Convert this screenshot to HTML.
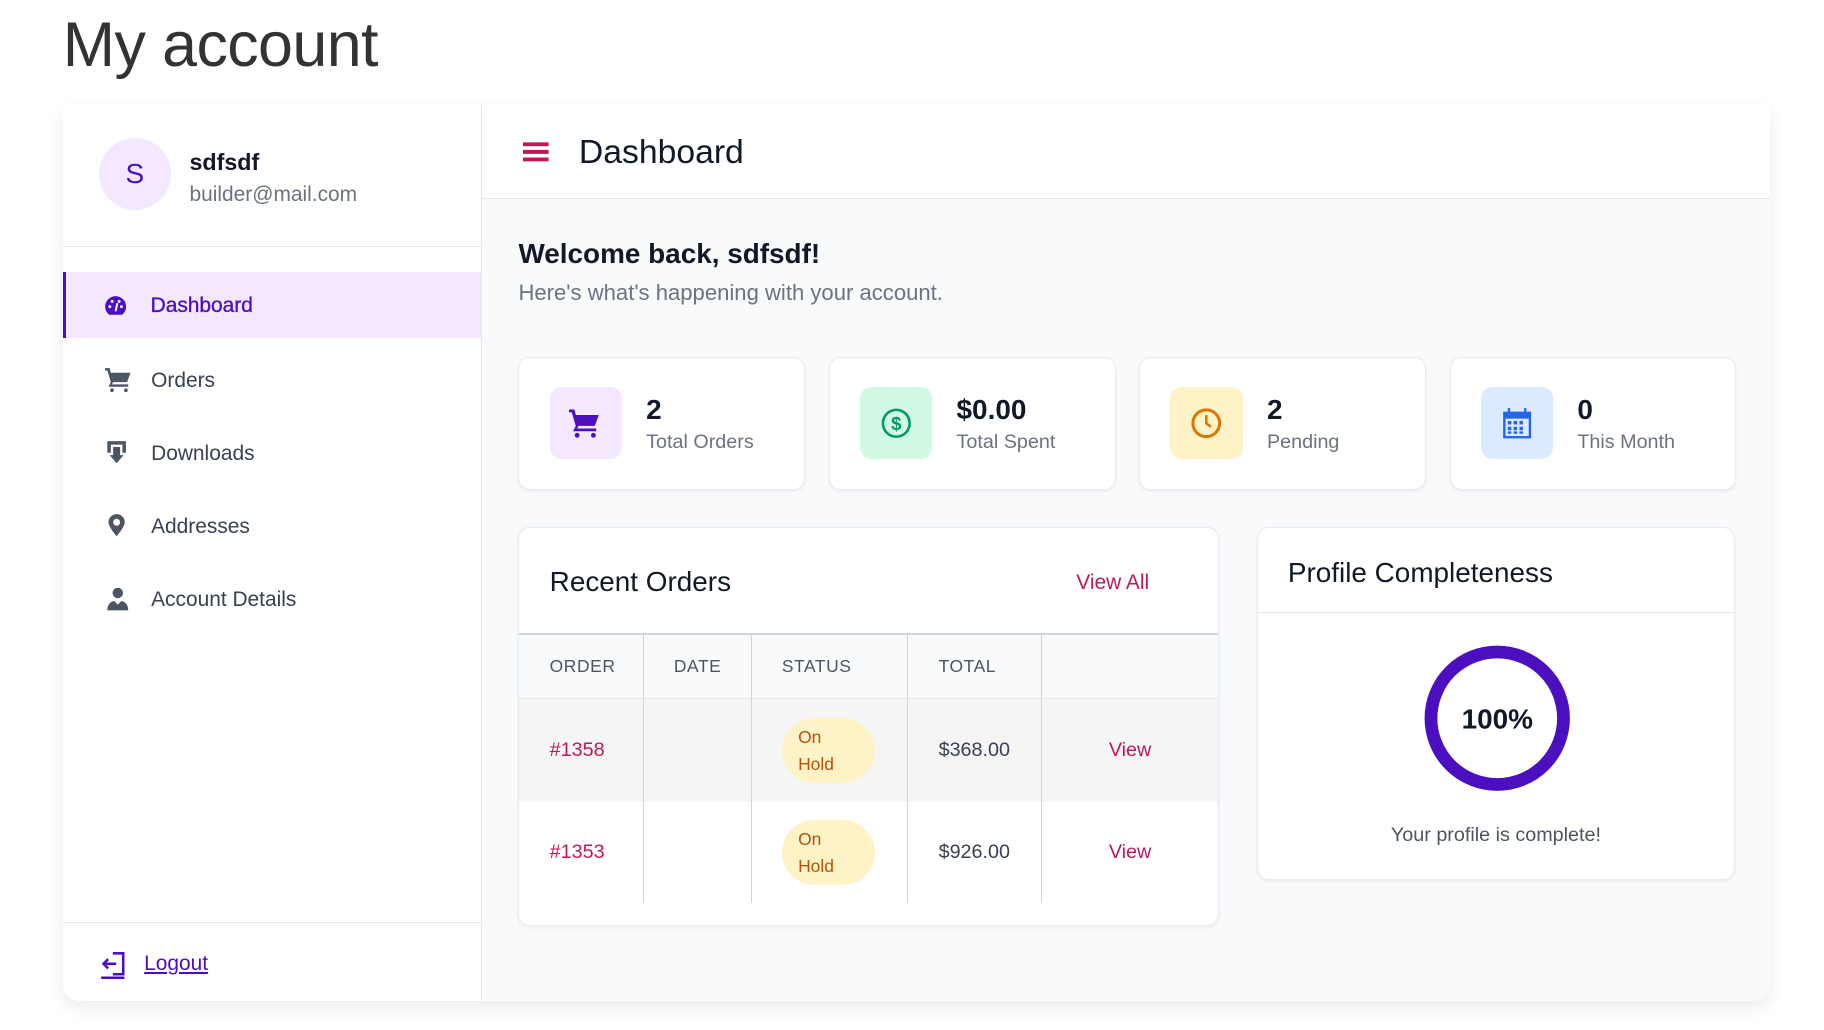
<!DOCTYPE html>
<html><head><meta charset="utf-8">
<style>
html{zoom:1.1625}
body{margin:0;width:1569px;height:886px;background:#fff;font-family:"Liberation Sans",sans-serif;position:relative;overflow:hidden;color:#1f2937}
.a{position:absolute}
h1{position:absolute;left:54px;top:8px;margin:0;font-size:54px;font-weight:400;color:#333;letter-spacing:-0.5px}
.panel{left:54px;top:90px;width:1469px;height:771px;background:#f8fafc;border-radius:0 0 14px 14px;box-shadow:0 6px 14px rgba(0,0,0,.08);overflow:hidden}
.side{left:0;top:0;width:360px;height:771px;background:#fff;border-right:1px solid #e5e7eb}
.nav{left:0;width:360px;height:57px;display:flex;align-items:center;font-size:18px;color:#374151}
.nav svg{position:absolute;left:36px}
.nav span{position:absolute;left:76px;top:19px}
.card{background:#fff;border:1px solid #e8ebef;border-radius:10px;box-shadow:0 1px 3px rgba(0,0,0,.06)}
.ib{position:absolute;left:26px;top:25px;width:62px;height:62px;border-radius:10px;display:flex;align-items:center;justify-content:center}
.num{position:absolute;left:109px;top:31px;font-size:24px;font-weight:700;color:#111827}
.lbl{position:absolute;left:109px;top:63px;font-size:17px;color:#6b7280}
td,th{border-left:1px solid #d1d5db;padding:0 0 0 26px;text-align:left}
th{font-weight:400;font-size:15px;letter-spacing:.5px;color:#4b5563;height:54px;border-bottom:1px solid #e5e7eb;background:#f8fafc}
td{font-size:17px;color:#374151}
.badge{display:inline-block;background:#fef3c7;color:#b45309;font-size:15px;line-height:23px;padding:5px 14px;border-radius:28px;width:52px}
.v{color:#be185d;text-align:center;padding:0}
</style></head><body>
<h1>My account</h1>
<div class="a panel">
 <div class="a side">
  <div class="a" style="left:31px;top:29px;width:62px;height:62px;border-radius:50%;background:#f3e8ff;color:#4c0fbf;font-size:24px;display:flex;align-items:center;justify-content:center">S</div>
  <div class="a" style="left:109px;top:38px;font-size:20px;font-weight:700;color:#111827">sdfsdf</div>
  <div class="a" style="left:109px;top:67px;font-size:18px;color:#6b7280">builder@mail.com</div>
  <div class="a" style="left:0;top:122px;width:360px;border-top:1px solid #e5e7eb"></div>
  <div class="a nav" style="top:144px;background:#f3e8ff;border-left:3px solid #4c0fbf;width:357px;color:#4c0fbf;font-weight:500">
   <svg width="20" height="18" viewBox="0 0 20 18" style="left:33px"><path d="M10 1a9 9 0 0 0-9 9c0 3 1.5 5.5 3.5 7h11c2-1.5 3.5-4 3.5-7a9 9 0 0 0-9-9z" fill="#4c0fbf"/><circle cx="5" cy="10" r="1.3" fill="#f3e8ff"/><circle cx="7" cy="5.5" r="1.3" fill="#f3e8ff"/><circle cx="13" cy="5.5" r="1.3" fill="#f3e8ff"/><circle cx="15" cy="10" r="1.3" fill="#f3e8ff"/><path d="M10 14l1.5-7" stroke="#f3e8ff" stroke-width="1.8"/></svg>
   <span style="left:73px;-webkit-text-stroke:0.3px #4c0fbf">Dashboard</span></div>
  <div class="a nav" style="top:208px"><svg width="24" height="22" viewBox="0 0 24 22"><path d="M0 1h4l1 4h17l-3 8H7l-1 2h14v2H3l2-4L2 3H0z" fill="#4b5563"/><circle cx="6" cy="20" r="1.6" fill="#4b5563"/><circle cx="18" cy="20" r="1.6" fill="#4b5563"/></svg><span>Orders</span></div>
  <div class="a nav" style="top:271px"><svg width="20" height="22" viewBox="0 0 20 22"><path d="M2 1h16v10h-3V4H5v7H2z M7 6h6v7h3l-6 7-6-7h3z" fill="#4b5563"/></svg><span>Downloads</span></div>
  <div class="a nav" style="top:334px"><svg width="20" height="22" viewBox="0 0 20 22"><path d="M10 1a7 7 0 0 0-7 7c0 4 7 12 7 12s7-8 7-12a7 7 0 0 0-7-7zm0 4a3 3 0 1 1 0 6 3 3 0 0 1 0-6z" fill="#4b5563"/></svg><span>Addresses</span></div>
  <div class="a nav" style="top:397px"><svg width="22" height="22" viewBox="0 0 22 22"><circle cx="11" cy="6" r="4.5" fill="#4b5563"/><path d="M2 21c0-5 3-8 6-8l3 3 3-3c3 0 6 3 6 8z" fill="#4b5563"/></svg><span>Account Details</span></div>
  <div class="a" style="left:0;top:703px;width:360px;border-top:1px solid #e5e7eb"></div>
  <svg class="a" style="left:32px;top:728px" width="22" height="24" viewBox="0 0 22 24"><path d="M11 2h9v18h-9M14 11H3m4-4-4 4 4 4M1 23h20" fill="none" stroke="#4c0fbf" stroke-width="2.2"/></svg>
  <div class="a" style="left:70px;top:729px;font-size:18px;color:#4c0fbf;text-decoration:underline">Logout</div>
 </div>
 <div class="a" style="left:361px;top:0;width:1108px;height:80px;background:#fff;border-bottom:1px solid #e5e7eb"></div>
 <svg class="a" style="left:396px;top:32px" width="24" height="18" viewBox="0 0 24 18"><path d="M0 2h22M0 8.5h22M0 15h22" stroke="#c2185b" stroke-width="3.4"/></svg>
 <div class="a" style="left:444px;top:24px;font-size:29px;color:#111827">Dashboard</div>
 <div class="a" style="left:392px;top:115px;font-size:24px;font-weight:700;color:#111827">Welcome back, sdfsdf!</div>
 <div class="a" style="left:392px;top:151px;font-size:19px;color:#6b7280">Here's what's happening with your account.</div>

 <div class="a card" style="left:392px;top:217px;width:245px;height:113px"><div class="ib" style="background:#f3e8ff"><svg width="28" height="26" viewBox="0 0 24 22"><path d="M0 1h4l1 4h17l-3 8H7l-1 2h14v2H3l2-4L2 3H0z" fill="#4c0fbf"/><circle cx="6" cy="20" r="1.8" fill="#4c0fbf"/><circle cx="18" cy="20" r="1.8" fill="#4c0fbf"/></svg></div><div class="num">2</div><div class="lbl">Total Orders</div></div>
 <div class="a card" style="left:659px;top:217px;width:245px;height:113px"><div class="ib" style="background:#d1fae5"><svg width="28" height="28" viewBox="0 0 28 28"><circle cx="14" cy="14" r="11.5" fill="none" stroke="#059669" stroke-width="2.2"/><text x="14" y="20" text-anchor="middle" font-family="Liberation Sans" font-size="16" fill="#059669" font-weight="700">$</text></svg></div><div class="num">$0.00</div><div class="lbl">Total Spent</div></div>
 <div class="a card" style="left:926px;top:217px;width:245px;height:113px"><div class="ib" style="background:#fef3c7"><svg width="28" height="28" viewBox="0 0 28 28"><circle cx="14" cy="14" r="11.5" fill="none" stroke="#d97706" stroke-width="2.6"/><path d="M14 7v7l4 3" fill="none" stroke="#d97706" stroke-width="2.2"/></svg></div><div class="num">2</div><div class="lbl">Pending</div></div>
 <div class="a card" style="left:1193px;top:217px;width:245px;height:113px"><div class="ib" style="background:#dbeafe"><svg width="26" height="28" viewBox="0 0 26 28"><rect x="1" y="4" width="24" height="23" fill="#2563eb"/><rect x="3" y="10" width="20" height="15" fill="#dbeafe"/><path d="M6 1v6M20 1v6" stroke="#2563eb" stroke-width="2"/><g fill="#2563eb"><rect x="5" y="12" width="3" height="3"/><rect x="10" y="12" width="3" height="3"/><rect x="15" y="12" width="3" height="3"/><rect x="5" y="17" width="3" height="3"/><rect x="10" y="17" width="3" height="3"/><rect x="15" y="17" width="3" height="3"/><rect x="5" y="21" width="3" height="2"/><rect x="10" y="21" width="3" height="2"/><rect x="15" y="21" width="3" height="2"/></g></svg></div><div class="num">0</div><div class="lbl">This Month</div></div>

 <div class="a card" style="left:392px;top:363px;width:601px;height:342px;overflow:hidden">
  <div class="a" style="left:26px;top:33px;font-size:24px;color:#111827">Recent Orders</div>
  <div class="a" style="left:479px;top:37px;font-size:18px;color:#be185d">View All</div>
  <table class="a" style="left:0;top:91px;width:602px;border-collapse:collapse;border-top:2px solid #d1d5db">
   <tr><th style="width:80px;border-left:none;height:54px">ORDER</th><th style="width:66px">DATE</th><th style="width:108px">STATUS</th><th style="width:88px">TOTAL</th><th style="border-right:1px solid #d1d5db"></th></tr>
   <tr style="background:#f5f5f5;height:89px"><td style="border-left:none;color:#be185d">#1358</td><td></td><td><span class="badge">On Hold</span></td><td>$368.00</td><td class="v" style="border-right:1px solid #d1d5db">View</td></tr>
   <tr style="height:87px"><td style="border-left:none;color:#be185d">#1353</td><td></td><td><span class="badge">On Hold</span></td><td>$926.00</td><td class="v" style="border-right:1px solid #d1d5db">View</td></tr>
  </table>
 </div>

 <div class="a card" style="left:1027px;top:363px;width:410px;height:302px">
  <div class="a" style="left:26px;top:25px;font-size:24px;color:#111827">Profile Completeness</div>
  <div class="a" style="left:0;top:73px;width:410px;border-top:1px solid #e5e7eb"></div>
  <svg class="a" style="left:143px;top:101px" width="126" height="126" viewBox="0 0 126 126"><circle cx="63" cy="63" r="57" fill="none" stroke="#4c0fbf" stroke-width="11"/><text x="63" y="72" text-anchor="middle" font-family="Liberation Sans" font-weight="700" font-size="24" fill="#111827">100%</text></svg>
  <div class="a" style="left:0;width:410px;top:255px;text-align:center;font-size:17px;color:#4b5563">Your profile is complete!</div>
 </div>
</div>
</body></html>
